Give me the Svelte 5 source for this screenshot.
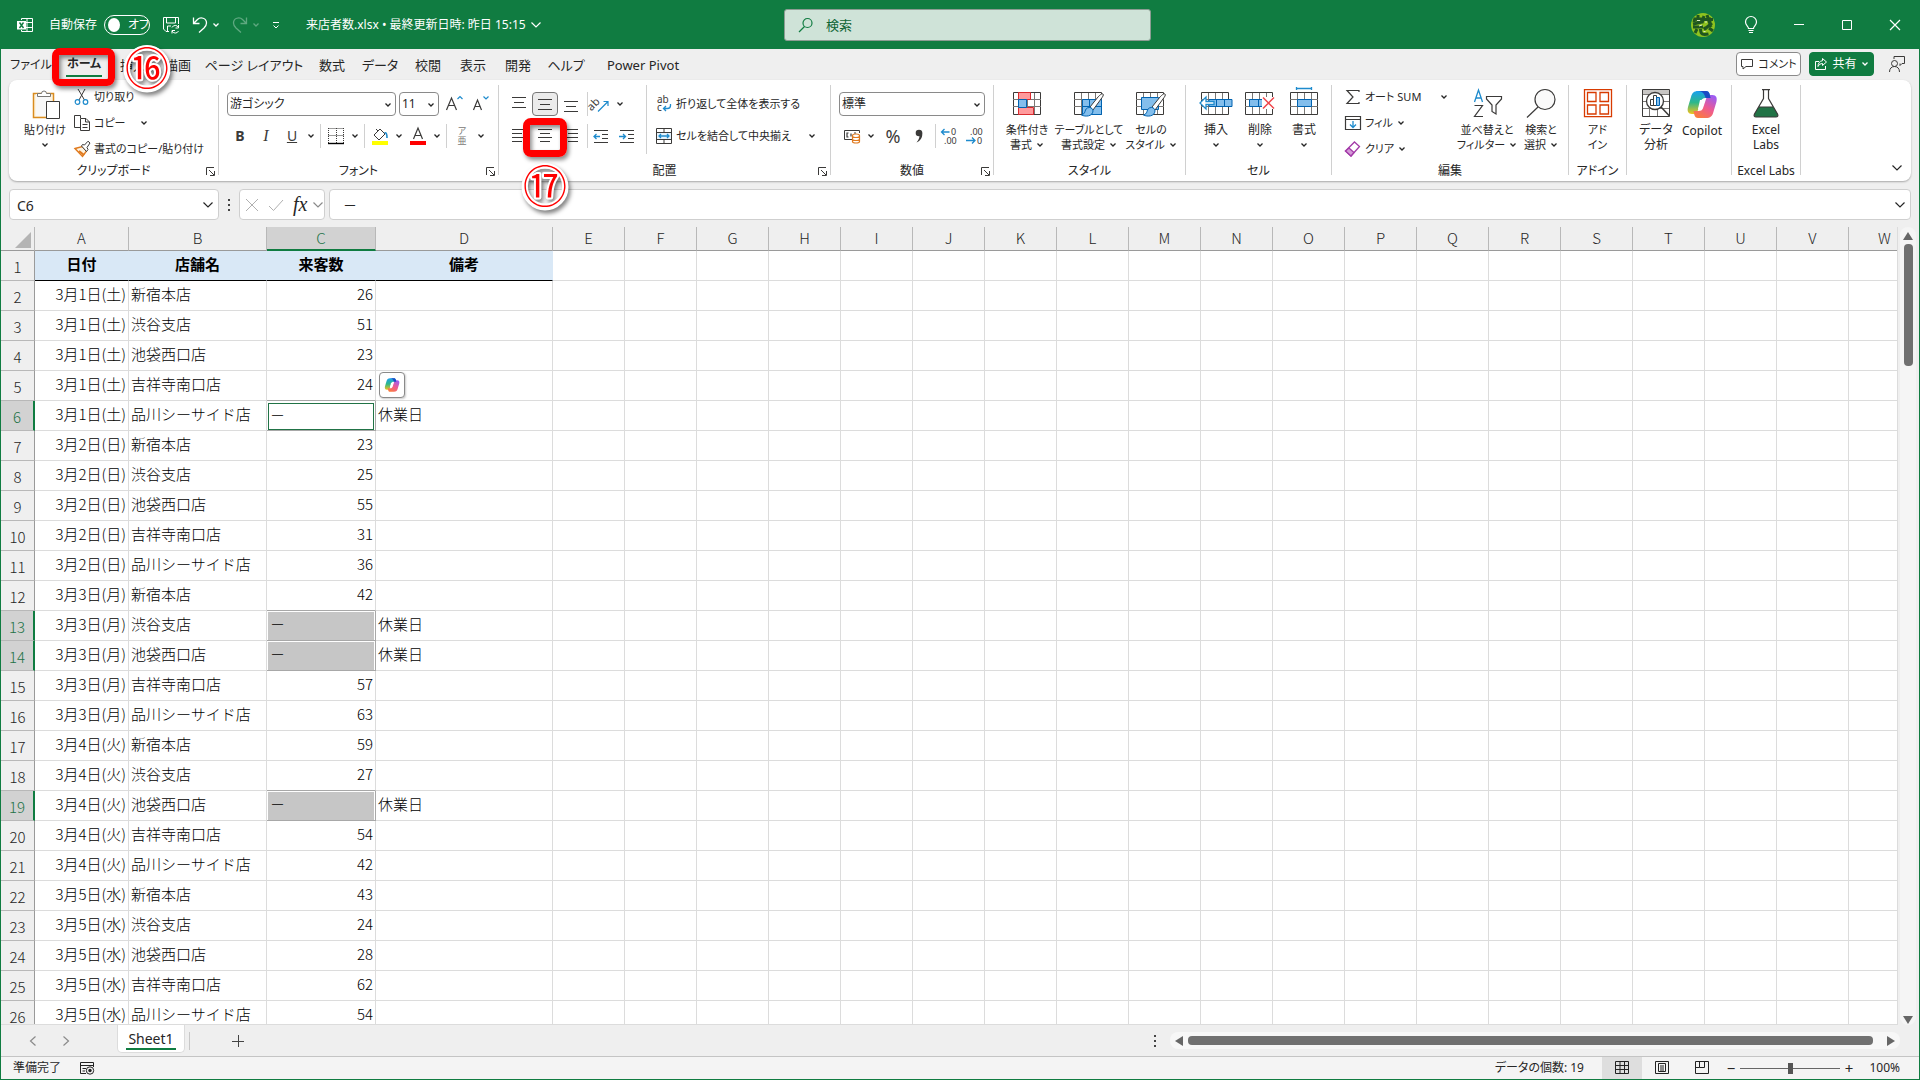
<script lang="ts">
  type Icon = { w: number; h: number; body: string }

  // Colours shared by the icon strokes
  const ink = '#3b3a39'
  const blue = '#1e8bcd'

  const gridBase = `<path d="M2.500 3.500h27v22h-27z" fill="#fff" stroke="${ink}"/><path d="M2 10.500h28M2 17.500h28M9.500 4v21M16.500 4v21M23.500 4v21" stroke="#797775"/>`
  const brush = `<path d="M31 5c-1-1-3 1-5 3l-8 10 3 3 8-11c1.500-2 3-4 2-5z" fill="#fff" stroke="${ink}"/><path d="M17.500 18.500c-3 0-4 2-4.500 4s-2 3-3.500 3.500c4 2 11 1.500 11.500-4 0-2-1.500-3.500-3.500-3.500z" fill="#83beec" stroke="#0063b1"/>`
  const copilot = `<path d="M12 2h8c2 0 3 1 3.600 3l1 4h-5c-3 0-4 1-5 4l-3 9c-1 2-2 3-4 3H6c-4 0-5-3-4-7l3-10C6 4 8 2 12 2z" fill="url(#cpA)"/><path d="M20 29h-8c-2 0-3-1-3.600-3l-1-4h5c3 0 4-1 5-4l3-9c1-2 2-3 4-3h2c4 0 5 3 4 7l-3 10c-1 4-3 6-7.400 6z" fill="url(#cpB)"/><path d="M12 2h8c2 0 3 1 3.600 3l1 4h-5c-1-4-3-7-7.600-7z" fill="#1b4bc4"/><path d="M14 11h5l-3 9h-4z" fill="#fff"/>`

  const icons: Record<string, Icon> = {
    excel: { w: 16, h: 16, body: `<path d="M4.500 3V1.500h11v13h-11V13M10 1.500v13M4 5.500h11.500M4 10.500h11.500" stroke="#fff"/><path d="M0 4h9v8.500H0z" fill="#fff"/><path d="M2.500 5.500l4 5.500M6.500 5.500l-4 5.500" stroke="#107c41" stroke-width="1.400"/>` },
    save: { w: 18, h: 18, body: `<path d="M7 15.500H4L1.500 13V1.500h15V8M4.500 2v5h9V2M5.500 15v-5H9" stroke="#fff"/><path d="M16.500 11.500a3.600 3.600 0 0 0-6.500 0M10 15a3.600 3.600 0 0 0 6.500 0M16.500 9v3h-3M10 17.500v-3h3" stroke="#fff"/>` },
    undo: { w: 16, h: 18, body: `<path d="M1.500 1.500v6h6M1.500 7.500l4-4c3-3 9-1.500 9 3.500 0 2-1 3.500-2.500 5l-5 4.500" stroke="#fff" stroke-width="1.300"/>` },
    redo: { w: 16, h: 18, body: `<path d="M14.500 1.500v6h-6M14.500 7.500l-4-4c-3-3-9-1.500-9 3.500 0 2 1 3.500 2.500 5l5 4.500" stroke="#5fa880" stroke-width="1.300"/>` },
    more: { w: 8, h: 8, body: `<path d="M1 1.500h6M1.500 4.500L4 7l2.500-2.500" stroke="#fff"/>` },
    lens: { w: 16, h: 16, body: `<circle cx="9.500" cy="6" r="4.500" stroke="#107c41" stroke-width="1.200"/><path d="M6.500 9.500L1 15" stroke="#107c41" stroke-width="1.200"/>` },
    avatar: { w: 24, h: 24, body: `<circle cx="12" cy="12" r="12" fill="#8fc31f"/><path d="M3 6h8M7 2v8M2 11l9-2M4 5l-1 4M13 3l-2 7M13 6.500h9M16 2l4 12M21 10l-6 5M2 14h10M18 5l3 3" stroke="#1f5620" stroke-width="3"/><path d="M6 16l-2 4M9.500 16c0 6 3 6 8 5M13 14l2 3M18 15l4 3" stroke="#1f5620" stroke-width="3"/><path d="M6 7.500h3M14 9h2M8 13l3-1M12.500 18.500h2" stroke="#dcebc6"/>` },
    bulb: { w: 14, h: 18, body: `<path d="M4.500 12.500c0-2-3-3-3-6.500a5.300 5.300 0 0 1 11 0c0 3.500-3 4.500-3 6.500zM4.500 14.500h5M5 16.500h4" stroke="#fff" stroke-width="1.200"/>` },
    min: { w: 12, h: 12, body: `<path d="M1 5.500h10" stroke="#fff"/>` },
    max: { w: 12, h: 12, body: `<path d="M1.500 1.500h9v9h-9z" stroke="#fff"/>` },
    close: { w: 12, h: 12, body: `<path d="M1 1l10 10M11 1L1 11" stroke="#fff" stroke-width="1.200"/>` },
    comment: { w: 14, h: 14, body: `<path d="M1.500 2.500h11v7H6l-3 2.500V9.500H1.500z" stroke="${ink}"/>` },
    share: { w: 14, h: 14, body: `<path d="M5 4.500H1.500v8h10V9" stroke="#fff"/><path d="M8.500 1.500l4 3.500-4 3.500v-2c-2 0-3.500 1-4.500 3 0-3 1.500-5.500 4.500-5.800z" stroke="#fff"/>` },
    person: { w: 18, h: 18, body: `<circle cx="6.500" cy="8.500" r="3" stroke="${ink}"/><path d="M1.500 17c0-3.500 2-5.500 5-5.500s5 2 5 5.500M6 4V1.500h10.500v7H14l-2 2v-2" stroke="${ink}"/>` },

    paste: { w: 36, h: 30, body: `<path d="M6.500 4.500h20v24h-20z" fill="#fdf3e0" stroke="#d98c1f" stroke-width="1.500"/><path d="M9 5h14v22H9z" fill="#f8f8f8"/><path d="M10.500 7.500v-3h4a2.500 2.500 0 0 1 5 0h4v3z" fill="#fff" stroke="#797775"/><path d="M19.500 12.500h13v17h-13z" fill="#fff" stroke="${ink}"/>` },
    cut: { w: 18, h: 18, body: `<path d="M5 1l6.500 11M12 1L6 12" stroke="${ink}"/><circle cx="4.500" cy="14" r="2.300" stroke="${blue}" stroke-width="1.200"/><circle cx="12.500" cy="14" r="2.300" stroke="${blue}" stroke-width="1.200"/>` },
    copy: { w: 18, h: 18, body: `<path d="M7 13.500H1.500v-12h6V4M7.500 4.500H13l3.500 3.500v8.500h-9z" stroke="${ink}"/><path d="M12.500 4.500V8h4M9.500 10.500h5M9.500 13.500h5" stroke="${ink}"/>` },
    painter: { w: 18, h: 18, body: `<path d="M2 8.500l7.500-2 4 4.500-4 5.500z" fill="#fdf3e0" stroke="#e07a1f" stroke-width="1.400"/><path d="M6 11l5 4" stroke="#e07a1f" stroke-width="2"/><path d="M8.500 6l5 5.500 1.500-2-1-2L17 3l-2-1.800L11.500 5l-2-.5z" fill="#fff" stroke="${ink}"/>` },
    grow: { w: 20, h: 20, body: `<path d="M2.500 16L7.500 4l5 12M4.500 11.500h6" stroke="${ink}" stroke-width="1.200"/><path d="M13.500 5l2.500-2.500L18.500 5" stroke="${blue}" stroke-width="1.200"/>` },
    shrink: { w: 20, h: 20, body: `<path d="M3.500 16L7.500 6l4 10M5 12.500h5" stroke="${ink}" stroke-width="1.200"/><path d="M13.500 2.500L16 5l2.500-2.500" stroke="${blue}" stroke-width="1.200"/>` },
    borders: { w: 16, h: 18, body: `<path d="M.5 1.500h15M.5 8.500h15M.5 1v15M8.500 1v15M15.500 1v15" stroke="${ink}" stroke-dasharray="1 1"/><path d="M0 16.500h16" stroke="#000" stroke-width="1.400"/>` },
    fill: { w: 18, h: 18, body: `<path d="M3 8l6-6 5 5-6 6zM7 4l-2-2" fill="#fff" stroke="${ink}"/><path d="M13.500 6c2-1 2.500 2 2.500 5" stroke="${blue}" stroke-width="1.600"/><path d="M1 14h16v4H1z" fill="#ff0"/>` },
    fontcolor: { w: 18, h: 18, body: `<path d="M4.500 12L9 1l4.500 11M6 8.500h6" stroke="${ink}" stroke-width="1.200"/><path d="M1 14h16v4H1z" fill="#f00"/>` },
    top: { w: 14, h: 16, body: `<path d="M0 1.500h14M2 6.500h10M0 11.500h14" stroke="${ink}"/>` },
    middle: { w: 14, h: 16, body: `<path d="M0 3.500h14M2 8.500h10M0 13.500h14" stroke="${ink}"/>` },
    bottom: { w: 14, h: 16, body: `<path d="M0 5.500h14M2 10.500h10M0 15.500h14" stroke="${ink}"/>` },
    left: { w: 14, h: 16, body: `<path d="M0 1.500h14M0 5.500h10M0 9.500h14M0 13.500h10" stroke="${ink}"/>` },
    center: { w: 14, h: 16, body: `<path d="M0 1.500h14M2 5.500h10M0 9.500h14M2 13.500h10" stroke="${ink}"/>` },
    right: { w: 14, h: 16, body: `<path d="M0 1.500h14M4 5.500h10M0 9.500h14M4 13.500h10" stroke="${ink}"/>` },
    orient: { w: 18, h: 18, body: `<text x="-5" y="10" transform="rotate(-45 5 8)" font-size="11" font-family="Noto Sans" fill="${ink}">ab</text><path d="M6 16.500L16 6.500M11.500 6.500H16V11" stroke="${blue}" stroke-width="1.200"/>` },
    outdent: { w: 16, h: 16, body: `<path d="M1 2.500h14M9 6.500h6M9 10.500h6M1 14.500h14" stroke="${ink}"/><path d="M1 8.500h6M3.500 6L1 8.500 3.500 11" stroke="${blue}" stroke-width="1.300"/>` },
    indent: { w: 16, h: 16, body: `<path d="M1 2.500h14M9 6.500h6M9 10.500h6M1 14.500h14" stroke="${ink}"/><path d="M0 8.500h6M4 6l2.500 2.500L4 11" stroke="${blue}" stroke-width="1.300"/>` },
    wrap: { w: 16, h: 18, body: `<text x="1" y="8" font-size="10" font-family="Noto Sans" fill="${ink}">ab</text><text x="1" y="16" font-size="10" font-family="Noto Sans" fill="${ink}">c</text><path d="M14.500 9v1.500c0 2-1 3-3 3H7.500M10 11l-2.500 2.500L10 16" stroke="${blue}" stroke-width="1.300"/>` },
    merge: { w: 16, h: 16, body: `<path d="M.5 .5h15v15H.5zM.5 4.500h15M.5 11.500h15M8 .5v4M8 11.500v4" stroke="${ink}"/><path d="M1 5h14v6H1z" fill="#e5f2fb"/><path d="M3 8h10M5 6L3 8l2 2M11 6l2 2-2 2" stroke="${blue}" stroke-width="1.300"/>` },
    money: { w: 18, h: 16, body: `<path d="M9 11.500H1.500v-9h15V5" stroke="${ink}"/><path d="M5.500 5H4v4h1.500M8 5.500v3M11 5h2" stroke="${ink}" stroke-width="1.200"/><path d="M9.500 7.500v6c0 2 7 2 7 0v-6c0-2-7-2-7 0zM9.500 8c0 2 7 2 7 0M9.500 11c0 2 7 2 7 0" fill="#fff" stroke="#e07a1f" stroke-width="1.200"/>` },
    comma: { w: 12, h: 16, body: `<circle cx="6" cy="5" r="3.300" fill="${ink}"/><path d="M9 4.500c1 4-1 8-5.500 10 2-2.500 3-4.500 3-7z" fill="${ink}"/>` },
    decInc: { w: 18, h: 18, body: `<path d="M1.500 5h8M4.500 2L1.500 5l3 3" stroke="${blue}" stroke-width="1.300"/><text x="11" y="8" font-size="9" font-family="Noto Sans" fill="${ink}">0</text><text x="4" y="17" font-size="9" font-family="Noto Sans" fill="${ink}">.00</text>` },
    decDec: { w: 18, h: 18, body: `<path d="M0 13.500h9M6 10.500l3 3-3 3" stroke="${blue}" stroke-width="1.300"/><text x="4" y="8" font-size="9" font-family="Noto Sans" fill="${ink}">.00</text><text x="11" y="17" font-size="9" font-family="Noto Sans" fill="${ink}">0</text>` },

    condfmt: { w: 32, h: 30, body: `${gridBase}<path d="M7.500 3.500h12v7h-12zM7.500 18.500h15v7h-15z" fill="#ff9a9c" stroke="#d92b2f"/><path d="M7.500 10.500h8v8h-8z" fill="#83beec" stroke="#0063b1"/>` },
    tablefmt: { w: 34, h: 30, body: `${gridBase}<path d="M10.500 10.500h19v15h-19z" fill="#83beec" stroke="#0063b1"/><path d="M10 17.500h19M17.500 11v14" stroke="#0063b1"/>${brush}` },
    cellstyle: { w: 34, h: 30, body: `${gridBase}<path d="M7.500 8.500h17v12h-17z" fill="#83beec" stroke="#0063b1"/>${brush}` },
    insert: { w: 34, h: 30, body: `${gridBase}<path d="M10 10.500h23v7H10z" fill="#83beec" stroke="#0063b1"/><path d="M17.500 11v6M25.500 11v6" stroke="#0063b1"/><path d="M15 12.500H7V8L1 14l6 6v-4.500h8z" fill="#fff" stroke="${blue}" stroke-width="1.300"/>` },
    remove: { w: 34, h: 30, body: `${gridBase}<path d="M6.500 10.500h17v7h-17z" fill="#83beec" stroke="#0063b1"/><path d="M15.500 11v6" stroke="#0063b1"/><path d="M19 8h14v12H19z" fill="#fff"/><path d="M20 8.500l11 11M31 8.500l-11 11" stroke="#f0454a" stroke-width="1.500"/>` },
    cellfmt: { w: 32, h: 30, body: `<g>${gridBase}</g><path d="M9.500 10.500h14v7h-14z" fill="#83beec" stroke="#0063b1"/><path d="M8.500-2v3M23.500-2v3M9-.5h14" stroke="${blue}" stroke-width="1.300"/>` },
    sigma: { w: 18, h: 18, body: `<path d="M15 4V2.500H3L9 9l-6 6.500h12V14" stroke="${ink}" stroke-width="1.200"/>` },
    filldown: { w: 18, h: 18, body: `<path d="M1.500 2.500h15v13h-15zM1.500 5.500h15" stroke="${ink}" stroke-width="1.200"/><path d="M9 7v6.500M6 10.500l3 3 3-3" stroke="${blue}" stroke-width="1.300"/>` },
    eraser: { w: 18, h: 18, body: `<path d="M10.500 2l5 4.500L7 16 1.500 11z" fill="#fff" stroke="#a33aa8" stroke-width="1.300"/><path d="M5 8l5 4.500L7 16 1.500 11z" fill="#d59ad8" stroke="#a33aa8" stroke-width="1.300"/>` },
    sort: { w: 32, h: 30, body: `<path d="M3.500 13L7.500 1l4 12M5 9h5.500" stroke="${blue}" stroke-width="1.300"/><path d="M3.500 16.500h8l-8 11h8.500" stroke="${ink}" stroke-width="1.200"/><path d="M15.500 7.500h15v2.500l-5.500 6v9l-4-2.500V16l-5.500-6z" stroke="${ink}" stroke-width="1.200"/>` },
    find: { w: 32, h: 30, body: `<circle cx="20" cy="10.500" r="10" fill="#fafafa" stroke="${ink}" stroke-width="1.200"/><path d="M13 18L2 28.500" stroke="${ink}" stroke-width="1.200"/>` },
    addin: { w: 32, h: 30, body: `<path d="M2.500 .7h27v27h-27zM5.500 3.500h8.500v9H5.500zM18 3.500h8.500v9H18zM5.500 16h8.500v9H5.500zM18 16h8.500v9H18z" stroke="#d83b01" stroke-width="1.300"/>` },
    analyze: { w: 32, h: 30, body: `<path d="M2.500 .5h27v27h-27z" fill="#fff" stroke="${ink}"/><path d="M3 1h26v4H3z" fill="#c8c6c4"/><path d="M3 5.500h26M3 12.500h26M3 19.500h26M9.500 20v7M17.500 20v7" stroke="#797775"/><circle cx="15" cy="12" r="8.500" fill="#fff" stroke="${ink}" stroke-width="1.300"/><path d="M10.500 10.500h3v6h-3zM13.500 6.500h3v10h-3z" stroke="${ink}"/><path d="M16.500 8.500h3v8h-3z" fill="#83beec" stroke="#0063b1"/><path d="M21 18l8.500 9" stroke="${ink}" stroke-width="1.500"/>` },
    copilot: { w: 32, h: 31, body: `<defs><linearGradient id="cpA" x1="0" y1="0" x2="0" y2="1"><stop offset="0" stop-color="#1aa0f0"/><stop offset=".5" stop-color="#2db88a"/><stop offset="1" stop-color="#f2c21b"/></linearGradient><linearGradient id="cpB" x1=".8" y1="0" x2=".2" y2="1"><stop offset="0" stop-color="#9a5cf5"/><stop offset=".5" stop-color="#ee5a92"/><stop offset="1" stop-color="#fb7d3a"/></linearGradient></defs>${copilot}` },
    labs: { w: 32, h: 30, body: `<path d="M8.500 18h15l4 7c1 2 0 3-1.500 3H6c-1.500 0-2.500-1-1.500-3z" fill="#217346"/><path d="M12 .7h8M13.500 1v8.500L4.500 25c-1 2 0 3 1.500 3h20c1.500 0 2.500-1 1.500-3L18.500 9.500V1M8.500 18h15" stroke="${ink}" stroke-width="1.200"/>` },
    launcher: { w: 9, h: 9, body: `<path d="M.5 8V.5H8M3 3l5 5M8.500 4v4.500H4" stroke="${ink}"/>` },
    cancel: { w: 14, h: 14, body: `<path d="M1 1l12 12M13 1L1 13" stroke="#b0b0b0"/>` },
    enter: { w: 16, h: 14, body: `<path d="M1 8l4.500 4.500L15 2" stroke="#b0b0b0"/>` },
    prev: { w: 8, h: 12, body: `<path d="M6.500 1.500L1.500 6l5 4.500" stroke="#8a8a8a" stroke-width="1.200"/>` },
    next: { w: 8, h: 12, body: `<path d="M1.500 1.500L6.500 6l-5 4.500" stroke="#8a8a8a" stroke-width="1.200"/>` },
    plus: { w: 12, h: 12, body: `<path d="M0 6.500h12M6.500 0v12" stroke="#444"/>` },
    macro: { w: 16, h: 14, body: `<path d="M7 12.500H1.500v-11h13V6M1.500 4.500h13M3.500 7.500H7M3.500 10H6" stroke="#222"/><circle cx="11" cy="9.500" r="3.700" stroke="#222"/><circle cx="11" cy="9.500" r="1.700" fill="#222"/>` },
    normal: { w: 14, h: 14, body: `<path d="M.5 .5h13v12H.5zM5 .5v12M9.500 .5v12M.5 4.500h13M.5 8.500h13" stroke="#222"/>` },
    pageview: { w: 14, h: 14, body: `<path d="M.5 .5h13v12H.5zM3.500 2.500h7v8h-7zM5 5h4M5 7h4M5 9h4" stroke="#222"/>` },
    breakview: { w: 14, h: 14, body: `<path d="M.5 .5h13v12H.5zM4.500 .5v6h5v-6M.5 6.500h4" stroke="#222"/>` },
  }

  const tabs = ['ファイル', 'ホーム', '挿入', '描画', 'ページ レイアウト', '数式', 'データ', '校閲', '表示', '開発', 'ヘルプ', 'Power Pivot']
  const columns = 'ABCDEFGHIJKLMNOPQRSTUVW'.split('')
  const extra = columns.slice(4)

  const stores = ['新宿本店', '渋谷支店', '池袋西口店', '吉祥寺南口店', '品川シーサイド店']
  const days = ['3月1日(土)', '3月2日(日)', '3月3日(月)', '3月4日(火)', '3月5日(水)']
  const counts: (number | null)[] = [
    26, 51, 23, 24, null,
    23, 25, 55, 31, 36,
    42, null, null, 57, 63,
    59, 27, null, 54, 42,
    43, 24, 28, 62, 54,
  ]

  const rows = counts.map((count, i) => ({
    no: i + 2,
    date: days[Math.floor(i / 5)],
    store: stores[i % 5],
    count,
    note: count === null ? '休業日' : '',
  }))

  let autosave = $state(false)
  let zoom = $state(100)
  let query = $state('')
</script>

{#snippet icon(name: string)}
  <svg class="icon" width={icons[name].w} height={icons[name].h} viewBox="0 0 {icons[name].w} {icons[name].h}" fill="none" aria-hidden="true">{@html icons[name].body}</svg>
{/snippet}

{#snippet chev()}
  <svg class="chev" width="8" height="8" viewBox="0 0 8 8" fill="none" aria-hidden="true"><path d="M1.500 2.500L4 5l2.500-2.500" stroke="currentColor" stroke-width="1.300" /></svg>
{/snippet}

{#snippet bigChev()}
  <svg class="chev" width="12" height="8" viewBox="0 0 12 8" fill="none" aria-hidden="true"><path d="M1.500 1.500L6 6l4.500-4.500" stroke="currentColor" stroke-width="1.200" /></svg>
{/snippet}

{#snippet drop(label: string)}
  <button class="drop" aria-label={label}>{@render chev()}</button>
{/snippet}

{#snippet tool(name: string, label: string)}
  <button class="tool" aria-label={label}>{@render icon(name)}</button>
{/snippet}

{#snippet big(name: string, line1: string, line2: string, arrow: boolean)}
  <button class="big">
    {@render icon(name)}
    <span>{line1}</span>
    <span>{line2}{#if arrow}{@render chev()}{/if}</span>
  </button>
{/snippet}

{#snippet small(name: string, label: string)}
  <button class="small">{@render icon(name)}<span>{label}</span></button>
{/snippet}

{#snippet caption(text: string, launcher: boolean)}
  <div class="caption">
    <span>{text}</span>
    {#if launcher}<button class="launcher" aria-label="{text}の設定">{@render icon('launcher')}</button>{/if}
  </div>
{/snippet}

{#snippet step(mark: string)}
  <svg class="step" width="60" height="60" viewBox="0 0 60 60" aria-hidden="true">
    <circle cx="30" cy="30" r="21" fill="none" stroke="#fff" stroke-width="5" />
    <text x="30" y="46" text-anchor="middle">{mark}</text>
  </svg>
{/snippet}

<div class="window">
  <header class="titlebar">
    <div class="quick">
      {@render icon('excel')}
      <label class="autosave">
        <span>自動保存</span>
        <input type="checkbox" role="switch" bind:checked={autosave} />
        <span class="switch"><i></i>{autosave ? 'オン' : 'オフ'}</span>
      </label>
      <button class="plain" aria-label="上書き保存">{@render icon('save')}</button>
      <button class="plain undo" aria-label="元に戻す">{@render icon('undo')}{@render chev()}</button>
      <button class="plain undo off" aria-label="やり直し">{@render icon('redo')}{@render chev()}</button>
      <button class="plain" aria-label="クイック アクセス">{@render icon('more')}</button>
      <button class="plain filename">来店者数.xlsx • 最終更新日時: 昨日 15:15{@render bigChev()}</button>
    </div>
    <label class="search">
      {@render icon('lens')}
      <input type="search" placeholder="検索" aria-label="検索" bind:value={query} />
    </label>
    <div class="controls">
      <button aria-label="アカウント">{@render icon('avatar')}</button>
      <button aria-label="ヒント">{@render icon('bulb')}</button>
      <button aria-label="最小化">{@render icon('min')}</button>
      <button aria-label="最大化">{@render icon('max')}</button>
      <button aria-label="閉じる">{@render icon('close')}</button>
    </div>
  </header>

  <nav class="tabs">
    <div class="tablist">
      {#each tabs as tab}
        {#if tab === 'ホーム'}
          <div class="marked home">
            <button class="tab active">{tab}</button>
            <div class="frame"></div>
            {@render step('⑯')}
          </div>
        {:else}
          <button class="tab">{tab}</button>
        {/if}
      {/each}
    </div>
    <div class="actions">
      <button class="comments">{@render icon('comment')}コメント</button>
      <button class="share">{@render icon('share')}共有{@render chev()}</button>
      <button class="plain" aria-label="ユーザー">{@render icon('person')}</button>
    </div>
  </nav>

  <section class="ribbon">
    <div class="group clipboard">
      <div class="body">
        {@render big('paste', '貼り付け', '', true)}
        <div class="stack">
          {@render small('cut', '切り取り')}
          <div class="line">{@render small('copy', 'コピー')}{@render drop('コピーの種類')}</div>
          {@render small('painter', '書式のコピー/貼り付け')}
        </div>
      </div>
      {@render caption('クリップボード', true)}
    </div>

    <div class="group font">
      <div class="body rows">
        <div class="line">
          <div class="combo name">
            <select aria-label="フォント"><option>游ゴシック</option></select>
            {@render chev()}
          </div>
          <div class="combo size">
            <select aria-label="フォント サイズ"><option>11</option></select>
            {@render chev()}
          </div>
          {@render tool('grow', '拡大')}
          {@render tool('shrink', '縮小')}
        </div>
        <div class="line">
          <button class="tool letter"><b>B</b></button>
          <button class="tool letter serif"><i>I</i></button>
          <button class="tool letter"><u>U</u></button>
          {@render drop('下線')}
          <span class="sep"></span>
          {@render tool('borders', '罫線')}{@render drop('罫線の種類')}
          <span class="sep"></span>
          {@render tool('fill', '塗りつぶし')}{@render drop('塗りつぶしの色')}
          {@render tool('fontcolor', 'フォントの色')}{@render drop('色')}
          <span class="sep"></span>
          <button class="tool ruby"><span>ア</span><span>亜</span></button>
          {@render drop('ふりがな')}
        </div>
      </div>
      {@render caption('フォント', true)}
    </div>

    <div class="group align">
      <div class="body">
        <div class="rows">
          <div class="line">
            {@render tool('top', '上揃え')}
            <button class="tool pressed" aria-label="上下中央揃え" aria-pressed="true">{@render icon('middle')}</button>
            {@render tool('bottom', '下揃え')}
            <span class="sep"></span>
            {@render tool('orient', '方向')}{@render drop('方向の種類')}
          </div>
          <div class="line">
            {@render tool('left', '左揃え')}
            <div class="marked middle">
              {@render tool('center', '中央揃え')}
              <div class="frame"></div>
              {@render step('⑰')}
            </div>
            {@render tool('right', '右揃え')}
            <span class="sep"></span>
            {@render tool('outdent', 'インデントを減らす')}
            {@render tool('indent', 'インデントを増やす')}
          </div>
        </div>
        <div class="rows wraps">
          <div class="line">{@render small('wrap', '折り返して全体を表示する')}</div>
          <div class="line spread">{@render small('merge', 'セルを結合して中央揃え')}{@render drop('結合の種類')}</div>
        </div>
      </div>
      {@render caption('配置', true)}
    </div>

    <div class="group number">
      <div class="body rows">
        <div class="line">
          <div class="combo format">
            <select aria-label="数値の書式"><option>標準</option></select>
            {@render chev()}
          </div>
        </div>
        <div class="line">
          {@render tool('money', '通貨')}{@render drop('通貨の種類')}
          <button class="tool percent">%</button>
          {@render tool('comma', '桁区切り')}
          <span class="sep"></span>
          {@render tool('decInc', '小数点以下を増やす')}
          {@render tool('decDec', '小数点以下を減らす')}
        </div>
      </div>
      {@render caption('数値', true)}
    </div>

    <div class="group styles">
      <div class="body">
        {@render big('condfmt', '条件付き', '書式', true)}
        {@render big('tablefmt', 'テーブルとして', '書式設定', true)}
        {@render big('cellstyle', 'セルの', 'スタイル', true)}
      </div>
      {@render caption('スタイル', false)}
    </div>

    <div class="group cells">
      <div class="body">
        {@render big('insert', '挿入', '', true)}
        {@render big('remove', '削除', '', true)}
        {@render big('cellfmt', '書式', '', true)}
      </div>
      {@render caption('セル', false)}
    </div>

    <div class="group editing">
      <div class="body">
        <div class="stack">
          <div class="line spread">{@render small('sigma', 'オート SUM')}{@render drop('関数')}</div>
          <div class="line">{@render small('filldown', 'フィル')}{@render drop('フィルの種類')}</div>
          <div class="line">{@render small('eraser', 'クリア')}{@render drop('クリアの種類')}</div>
        </div>
        {@render big('sort', '並べ替えと', 'フィルター', true)}
        {@render big('find', '検索と', '選択', true)}
      </div>
      {@render caption('編集', false)}
    </div>

    <div class="group addins">
      <div class="body">{@render big('addin', 'アド', 'イン', false)}</div>
      {@render caption('アドイン', false)}
    </div>

    <div class="group analysis">
      <div class="body">
        {@render big('analyze', 'データ', '分析', false)}
        {@render big('copilot', 'Copilot', '', false)}
      </div>
    </div>

    <div class="group labs">
      <div class="body">{@render big('labs', 'Excel', 'Labs', false)}</div>
      {@render caption('Excel Labs', false)}
    </div>

    <button class="collapse" aria-label="リボンを折りたたむ">{@render bigChev()}</button>
  </section>

  <section class="formula">
    <div class="box namebox">
      <input aria-label="名前ボックス" value="C6" />
      <button aria-label="名前の一覧">{@render bigChev()}</button>
    </div>
    <span class="dots"><i></i><i></i><i></i></span>
    <div class="box fx">
      <button aria-label="キャンセル">{@render icon('cancel')}</button>
      <button aria-label="入力">{@render icon('enter')}</button>
      <button class="fxmark"><i>fx</i></button>
      <button class="dim" aria-label="関数の一覧">{@render bigChev()}</button>
    </div>
    <div class="box content">
      <input aria-label="数式バー" value="－" />
      <button aria-label="数式バーの展開">{@render bigChev()}</button>
    </div>
  </section>

  <main>
    <div class="sheet">
      <table>
        <colgroup>
          <col class="c-no" /><col class="c-a" /><col class="c-b" /><col class="c-c" /><col class="c-d" />
          {#each extra as letter (letter)}<col class="c-x" />{/each}
        </colgroup>
        <thead>
          <tr>
            <th class="corner" aria-label="すべて選択"><svg width="16" height="16" viewBox="0 0 16 16"><path d="M16 0v16H0z" fill="#b4b4b4" /></svg></th>
            {#each columns as letter}
              <th scope="col" class:current={letter === 'C'}>{letter}</th>
            {/each}
          </tr>
        </thead>
        <tbody>
          <tr class="heading">
            <th scope="row">1</th>
            <td>日付</td>
            <td>店舗名</td>
            <td>来客数</td>
            <td>備考</td>
            {#each extra as letter (letter)}<td></td>{/each}
          </tr>
          {#each rows as row (row.no)}
            <tr>
              <th scope="row" class:current={row.count === null}>{row.no}</th>
              <td class="num">{row.date}</td>
              <td>{row.store}</td>
              {#if row.count === null}
                <td class="picked" class:active={row.no === 6}><span>－</span></td>
              {:else}
                <td class="num" class:above={rows[row.no - 1]?.count === null}>{row.count}</td>
              {/if}
              <td class="note">
                {row.note}
                {#if row.no === 5}
                  <button class="hint" aria-label="Copilot">{@render icon('copilot')}</button>
                {/if}
              </td>
              {#each extra as letter (letter)}<td></td>{/each}
            </tr>
          {/each}
        </tbody>
      </table>
    </div>
    <div class="vscroll">
      <svg width="10" height="8" viewBox="0 0 10 8"><path d="M5 0l5 8H0z" fill="#666" /></svg>
      <i></i>
      <svg class="end" width="10" height="8" viewBox="0 0 10 8"><path d="M5 8L0 0h10z" fill="#666" /></svg>
    </div>
  </main>

  <section class="sheets">
    <button class="plain" aria-label="前のシート">{@render icon('prev')}</button>
    <button class="plain" aria-label="次のシート">{@render icon('next')}</button>
    <button class="sheettab"><span>Sheet1</span></button>
    <span class="divider"></span>
    <button class="plain add" aria-label="新しいシート">{@render icon('plus')}</button>
    <span class="dots"><i></i><i></i><i></i></span>
    <div class="hscroll">
      <svg width="8" height="10" viewBox="0 0 8 10"><path d="M0 5l8-5v10z" fill="#666" /></svg>
      <i></i>
      <svg class="end" width="8" height="10" viewBox="0 0 8 10"><path d="M8 5L0 0v10z" fill="#666" /></svg>
    </div>
  </section>

  <footer>
    <span>準備完了</span>
    <button class="plain" aria-label="マクロの記録">{@render icon('macro')}</button>
    <span class="count">データの個数: 19</span>
    <button class="view on" aria-label="標準">{@render icon('normal')}</button>
    <button class="view" aria-label="ページ レイアウト">{@render icon('pageview')}</button>
    <button class="view" aria-label="改ページ プレビュー">{@render icon('breakview')}</button>
    <button class="zoomstep">−</button>
    <input type="range" min="10" max="190" aria-label="ズーム" bind:value={zoom} />
    <button class="zoomstep">+</button>
    <span class="percentage">{zoom}%</span>
  </footer>
</div>

<style>
  :global(body) {
    margin: 0;
    background: #efefef;
  }

  * {
    box-sizing: border-box;
  }

  .window {
    display: flex;
    flex-direction: column;
    height: 100vh;
    overflow: hidden;
    border: 1px solid #107c41;
    border-top: 0;
    background: #efefef;
    color: #262626;
    font-family: 'Noto Sans', 'Noto Sans CJK JP', sans-serif;
    font-size: 12px;
    line-height: 16px;
    font-feature-settings: 'palt';
  }

  button,
  input,
  select {
    margin: 0;
    padding: 0;
    border: 0;
    background: none;
    color: inherit;
    font: inherit;
    font-feature-settings: inherit;
    outline: none;
  }

  button {
    display: flex;
    flex: none;
    align-items: center;
    justify-content: center;
    white-space: nowrap;
  }

  .icon,
  .chev {
    flex: none;
    display: block;
    overflow: visible;
  }

  /* Title bar */

  .titlebar {
    flex: none;
    display: grid;
    grid-template-columns: 783fr 367fr 768fr;
    align-items: center;
    height: 49px;
    background: #107c41;
    color: #fff;
  }

  .quick {
    display: flex;
    align-items: center;
    gap: 12px;
    padding-left: 16px;
  }

  .autosave {
    display: flex;
    align-items: center;
    gap: 7px;
    margin-left: 4px;
    white-space: nowrap;
  }

  .autosave input {
    position: absolute;
    opacity: 0;
  }

  .switch {
    display: flex;
    align-items: center;
    gap: 8px;
    width: 46px;
    height: 20px;
    padding-left: 3px;
    border: 1px solid #fff;
    border-radius: 10px;
  }

  .switch i {
    width: 14px;
    height: 14px;
    border-radius: 50%;
    background: #fff;
  }

  .undo {
    gap: 4px;
  }

  .off {
    color: #5fa880;
  }

  .filename {
    gap: 4px;
    margin-left: 14px;
  }

  .search {
    display: flex;
    align-items: center;
    gap: 12px;
    height: 32px;
    padding-left: 13px;
    border: 1px solid #8c9c93;
    border-radius: 3px;
    background: #cfe3d8;
    color: #107c41;
  }

  .search input {
    flex: 1;
    font-size: 13px;
  }

  .search input::placeholder {
    color: #0e6535;
    opacity: 1;
  }

  .controls {
    display: flex;
    justify-content: flex-end;
  }

  .controls button {
    width: 48px;
    height: 48px;
  }

  /* Ribbon tabs */

  .tabs {
    flex: none;
    display: flex;
    justify-content: space-between;
    height: 31px;
    font-size: 13px;
  }

  .tablist {
    display: grid;
    grid-template-columns: 54px 52px 46px 44px 108px 48px 48px 48px 42px 48px 48px 106px;
    padding-left: 3px;
  }

  .tab {
    width: 100%;
    height: 31px;
  }

  .tab:first-child {
    font-size: 12px;
  }

  .tab.active {
    width: 36px;
    height: 28px;
    margin: 0 auto;
    padding-top: 4px;
    border-bottom: 2px solid #107c41;
    font-weight: 700;
  }

  .marked {
    position: relative;
    z-index: 2;
  }

  .frame {
    position: absolute;
    border: 7px solid #f00;
    border-radius: 8px;
    box-shadow: 2px 3px 4px rgba(0, 0, 0, 0.45), inset 2px 3px 4px rgba(0, 0, 0, 0.45);
    pointer-events: none;
  }

  .home .frame {
    left: -6px;
    top: -1px;
    width: 63px;
    height: 38px;
  }

  .middle .frame {
    left: -9px;
    top: -6px;
    width: 44px;
    height: 39px;
  }

  .step {
    position: absolute;
    filter: drop-shadow(2px 3px 2px rgba(0, 0, 0, 0.5));
    pointer-events: none;
  }

  .step text {
    fill: #f00;
    stroke: #fff;
    stroke-width: 4px;
    stroke-linejoin: round;
    paint-order: stroke;
    font: 400 44px 'Noto Sans CJK JP', sans-serif;
  }

  .home .step {
    left: 59px;
    top: -10px;
  }

  .middle .step {
    left: -17px;
    top: 33px;
  }

  .actions {
    display: flex;
    align-items: center;
    gap: 8px;
    padding: 0 7px 1px 0;
  }

  .actions button {
    height: 24px;
    gap: 4px;
  }

  .actions .plain {
    width: 30px;
  }

  .comments,
  .share {
    width: 65px;
    border: 1px solid #8a8a8a;
    border-radius: 4px;
    background: #fff;
    font-size: 12px;
  }

  .comments {
    font-size: 11px;
  }

  .share {
    border-color: #107c41;
    background: #107c41;
    color: #fff;
  }

  /* Ribbon */

  .ribbon {
    flex: none;
    display: flex;
    height: 101px;
    margin: 0 8px;
    padding: 5px 0 6px;
    border-radius: 8px;
    background: #fff;
    box-shadow: 0 1px 2px rgba(0, 0, 0, 0.3);
  }

  .group {
    flex: none;
    display: flex;
    flex-direction: column;
    border-right: 1px solid #d0d0d0;
  }

  .clipboard { width: 210px; }
  .font { width: 280px; }
  .align { width: 332px; }
  .number { width: 163px; }
  .styles { width: 192px; }
  .cells { width: 146px; }
  .editing { width: 237px; }
  .addins { width: 58px; }
  .analysis { width: 105px; }
  .labs { width: 69px; }

  .body {
    flex: 1;
    display: flex;
    min-height: 0;
  }

  .clipboard .body,
  .font .body,
  .number .body {
    padding-left: 8px;
  }

  .align .body {
    padding-left: 7px;
  }

  .styles .body {
    padding-left: 5px;
  }

  .analysis .body {
    padding: 0 6px;
  }

  .cells .body {
    padding-left: 8px;
  }

  .editing .body {
    padding-left: 12px;
  }

  .caption {
    position: relative;
    height: 13px;
    line-height: 18px;
    text-align: center;
    white-space: nowrap;
  }

  .launcher {
    position: absolute;
    right: 3px;
    top: 5px;
  }

  .rows {
    display: flex;
    flex-direction: column;
    gap: 8px;
    padding-top: 7px;
  }

  .line {
    display: flex;
    align-items: center;
    height: 24px;
  }

  .stack {
    margin-top: -1px;
  }

  .stack > :global(*) {
    height: 26px;
  }

  .spread {
    justify-content: space-between;
  }

  .editing .stack {
    width: 106px;
    margin-right: 7px;
  }

  .small {
    gap: 3px;
    font-size: 11px;
  }

  .small .icon {
    width: 18px;
  }

  .big {
    flex: 1;
    flex-direction: column;
    justify-content: flex-start;
    padding-top: 4px;
    font-size: 11px;
    line-height: 15px;
  }

  .big .icon {
    margin-bottom: 3px;
  }

  .big span {
    display: flex;
    align-items: center;
    gap: 4px;
    height: 15px;
  }

  .analysis .big,
  .labs .big,
  .cells .big {
    font-size: 12px;
  }

  .clipboard .big,
  .styles .big {
    flex: none;
    width: 56px;
  }

  .styles .big:nth-child(2) {
    width: 68px;
  }

  .cells .big {
    flex: none;
    width: 44px;
  }

  .editing .big {
    flex: none;
    width: 60px;
  }

  .editing .big:last-child {
    width: 48px;
  }

  .drop {
    width: 12px;
    height: 22px;
  }

  .stack .drop {
    margin-left: 2px;
  }

  .clipboard .drop {
    margin-left: 12px;
  }

  .tool {
    width: 26px;
    height: 24px;
  }

  .pressed {
    border: 1px solid #777;
    border-radius: 4px;
    background: #ebebeb;
  }

  .letter {
    font-size: 14px;
    color: #3b3a39;
  }

  .serif {
    font-family: 'Liberation Serif', serif;
    font-size: 16px;
  }

  .percent {
    margin-left: 3px;
    font-size: 18px;
    color: #3b3a39;
  }

  .ruby {
    flex-direction: column;
    font-size: 9px;
    line-height: 10px;
    color: #797775;
  }

  .sep {
    flex: none;
    width: 1px;
    height: 24px;
    margin: 0 2px 0 3px;
    background: #d0d0d0;
  }

  .align .sep,
  .number .sep {
    margin-right: 0;
  }

  .combo {
    position: relative;
    height: 24px;
    border: 1px solid #8a8a8a;
    border-radius: 4px;
    background: #fff;
  }

  .combo select {
    width: 100%;
    height: 100%;
    padding-left: 2px;
    appearance: none;
  }

  .combo .chev {
    position: absolute;
    right: 3px;
    top: 8px;
    pointer-events: none;
  }

  .name {
    width: 169px;
    margin-right: 3px;
  }

  .size {
    width: 40px;
    margin-right: 2px;
  }

  .format {
    width: 146px;
  }

  .wraps {
    flex: 1;
    height: 69px;
    margin-left: 6px;
    padding: 7px 12px 0 8px;
    border-left: 1px solid #d0d0d0;
  }

  .collapse {
    align-self: flex-end;
    margin: 0 8px 3px auto;
  }

  /* Formula bar */

  .formula {
    flex: none;
    display: flex;
    align-items: center;
    height: 31px;
    margin: 8px 8px 7px;
    font-size: 14px;
  }

  .box {
    display: flex;
    align-items: center;
    height: 31px;
    padding: 0 4px 0 7px;
    border: 1px solid #cfcfcf;
    border-radius: 4px;
    background: #fff;
  }

  .box input {
    flex: 1;
    min-width: 0;
  }

  .namebox {
    width: 210px;
  }

  .namebox input {
    padding-top: 2px;
  }

  .dots {
    display: flex;
    flex-direction: column;
    align-items: center;
    gap: 3px;
    width: 20px;
  }

  .dots i {
    width: 2px;
    height: 2px;
    background: #444;
  }

  .fx {
    width: 86px;
    gap: 9px;
    padding: 0 1px 0 5px;
    margin-right: 4px;
  }

  .fxmark {
    font: italic 20px 'Liberation Serif', serif;
  }

  .fx .dim {
    margin-left: -4px;
    color: #8a8a8a;
  }

  .content {
    flex: 1;
    padding-left: 13px;
  }

  /* Sheet */

  main {
    flex: 1;
    display: flex;
    min-height: 0;
  }

  .sheet {
    flex: 1;
    min-width: 0;
    overflow: hidden;
    border-right: 1px solid #dcdcdc;
    border-bottom: 1px solid #dcdcdc;
    background: #fff;
  }

  table {
    table-layout: fixed;
    width: 1920px;
    border-collapse: separate;
    border-spacing: 0;
    font-family: 'Noto Sans CJK JP', sans-serif;
    font-size: 15px;
    font-weight: 300;
    line-height: 20px;
    font-feature-settings: normal;
    color: #000;
  }

  .c-no { width: 34px; }
  .c-a { width: 94px; }
  .c-b { width: 138px; }
  .c-c { width: 109px; }
  .c-d { width: 177px; }
  .c-x { width: 72px; }

  th {
    padding: 0;
    background: #efefef;
    font-weight: 300;
    color: #262626;
  }

  thead th {
    height: 24px;
    padding-bottom: 2px;
    border-right: 1px solid #b8b8b8;
    border-bottom: 1px solid #9a9a9a;
  }

  thead .corner {
    padding-right: 3px;
    line-height: 0;
    text-align: right;
    vertical-align: bottom;
  }

  thead .current {
    padding-bottom: 1px;
    border-bottom: 2px solid #107c41;
    background: #d2d2d2;
    color: #217346;
  }

  tbody th {
    height: 30px;
    padding-top: 2px;
    border-right: 1px solid #9a9a9a;
    border-bottom: 1px solid #b8b8b8;
  }

  tbody .current {
    border-right: 2px solid #107c41;
    background: #d2d2d2;
    color: #217346;
  }

  td {
    height: 30px;
    padding: 0 2px 4px;
    border-right: 1px solid #dcdcdc;
    border-bottom: 1px solid #dcdcdc;
    white-space: nowrap;
  }

  .num {
    text-align: right;
  }

  .above {
    border-bottom-color: #a8a8a8;
  }

  .heading td:nth-child(-n + 5) {
    border-right-color: #d9e8f6;
    border-bottom-color: #000;
    background: #d9e8f6;
    font-weight: 700;
    text-align: center;
  }

  .picked {
    padding: 1px 1px 0 1px;
    border-color: #a8a8a8;
  }

  .picked span {
    display: block;
    height: 28px;
    padding: 2px 2px 0;
    background: #c6c6c6;
  }

  .picked.active span {
    height: 27px;
    padding: 1px 1px 0;
    border: 1px solid #217346;
    background: #fff;
  }

  .note {
    position: relative;
  }

  .hint {
    position: absolute;
    left: 3px;
    top: 1px;
    width: 26px;
    height: 26px;
    border: 1px solid #8a8a8a;
    border-radius: 4px;
    background: #fff;
    box-shadow: 1px 1px 2px rgba(0, 0, 0, 0.2);
  }

  .hint .icon {
    width: 16px;
    height: 16px;
  }

  .vscroll {
    flex: none;
    display: flex;
    flex-direction: column;
    align-items: center;
    gap: 4px;
    width: 16px;
    margin: 0 3px 0 2px;
    padding: 5px 0 1px;
    border-radius: 8px;
    background: #f5f5f5;
  }

  .vscroll i {
    width: 9px;
    height: 122px;
    border-radius: 4px;
    background: #707070;
  }

  .vscroll .end {
    margin-top: auto;
  }

  /* Sheet tabs */

  .sheets {
    flex: none;
    display: flex;
    align-items: center;
    height: 32px;
    padding: 0 19px 0 15px;
    border-bottom: 1px solid #c4c4c4;
  }

  .sheets .plain {
    width: 33px;
  }

  .sheettab {
    align-self: flex-start;
    width: 68px;
    height: 28px;
    margin-left: 35px;
    border: 1px solid #dcdcdc;
    border-top: 0;
    border-radius: 0 0 5px 5px;
    background: #fff;
    font-size: 14px;
  }

  .sheettab span {
    padding: 4px 2px 1px;
    border-bottom: 2px solid #107c41;
  }

  .divider {
    width: 1px;
    height: 18px;
    margin: 0 31px 0 4px;
    background: #c8c8c8;
  }

  .sheets .dots {
    margin-left: auto;
    margin-right: 5px;
  }

  .hscroll {
    display: flex;
    align-items: center;
    gap: 5px;
    width: 730px;
    height: 17px;
    padding: 0 5px;
    border-radius: 8px;
    background: #f7f7f7;
  }

  .hscroll i {
    width: 685px;
    height: 9px;
    border-radius: 4px;
    background: #707070;
  }

  .hscroll .end {
    margin-left: auto;
  }

  /* Status bar */

  footer {
    flex: none;
    display: flex;
    align-items: center;
    height: 22px;
    padding: 0 19px 0 12px;
    background: #f4f4f4;
  }

  footer .plain {
    margin-left: 18px;
  }

  .count {
    margin-left: auto;
    margin-right: 18px;
  }

  .view {
    width: 40px;
    height: 22px;
  }

  .view.on {
    background: #dedede;
  }

  .zoomstep {
    width: 18px;
    font-size: 15px;
  }

  footer input {
    width: 100px;
    height: 16px;
    appearance: none;
  }

  footer input::-webkit-slider-runnable-track {
    height: 1px;
    background: #666;
  }

  footer input::-webkit-slider-thumb {
    width: 5px;
    height: 11px;
    margin-top: -5px;
    background: #555;
    appearance: none;
  }

  .percentage {
    width: 42px;
    text-align: right;
  }
</style>
